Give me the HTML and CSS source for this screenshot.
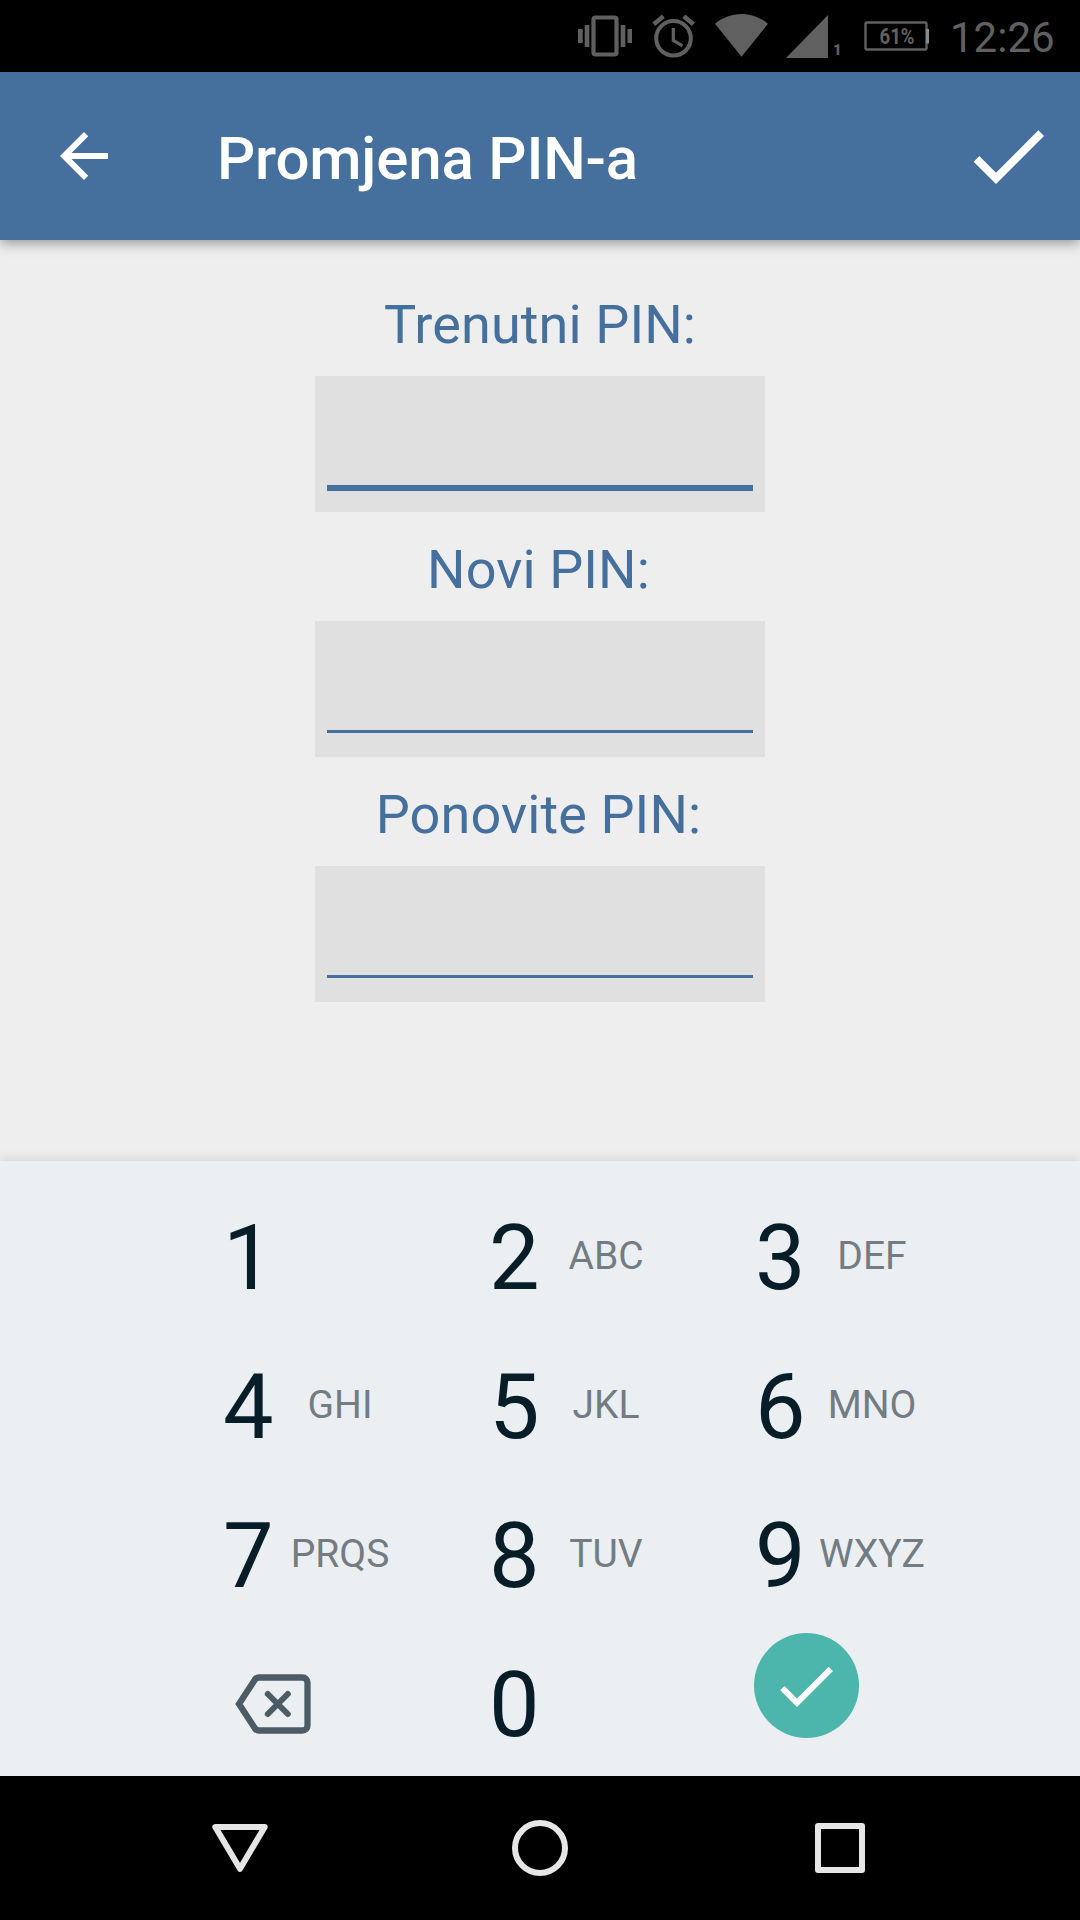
FILE: index.html
```html
<!DOCTYPE html>
<html lang="hr">
<head>
  <meta charset="utf-8">
  <title>Promjena PIN-a</title>
  <link rel="stylesheet" href="styles.css">
</head>
<body>
  <div class="screen">
    <div class="status-bar">
      <svg class="vibrate" width="56" height="44" viewBox="577 14 56 44">
        <path d="M578 29h4.7v14H578zM584.7 25h4.6v22h-4.6zM620.7 25h4.6v22h-4.6zM627.5 29h4.5v14h-4.5z"/>
        <rect x="593.5" y="17.5" width="23" height="37" rx="2" fill="none" stroke="#606060" stroke-width="4.2"/>
      </svg>
      <svg class="alarm" width="44" height="46" viewBox="652 13 44 46" fill="none" stroke="#606060">
        <circle cx="673.5" cy="38.3" r="17.3" stroke-width="4"/>
        <path d="M673.3 28v12.3l9.2 5.6" stroke-width="3.2"/>
        <path d="M653.8 24.3l9.6-8M693.4 24.3l-9.6-8" stroke-width="4.4"/>
      </svg>
      <svg class="wifi" width="54" height="44" viewBox="715 14 54 44">
        <path d="M715 23.8C722.5 17.5 732 14 741.5 14s19 3.5 26.5 9.8L741.5 56.8z"/>
      </svg>
      <div class="signal">
        <svg width="42" height="43" viewBox="0 0 42 43"><path d="M0 43L42 0v43z"/></svg>
        <span class="sim">1</span>
      </div>
      <svg class="battery" width="66" height="30" viewBox="864 20.5 66 30">
        <rect x="865.5" y="22" width="61" height="27" rx="1.5" fill="none" stroke="#606060" stroke-width="2.4"/>
        <path d="M926 28.5h3v14.5h-3z" fill="#8a8a8a"/>
        <text class="charge" x="879.5" y="43.8" textLength="35" lengthAdjust="spacingAndGlyphs">61%</text>
      </svg>
      <span class="clock">12:26</span>
    </div>

    <header class="app-bar">
      <svg width="72" height="72" viewBox="0 0 24 24"><path d="M20 11H7.83l5.59-5.59L12 4l-8 8 8 8 1.41-1.41L7.83 13H20z"/></svg>
      <h1 class="title">Promjena PIN-a</h1>
      <svg width="96" height="96" viewBox="0 0 24 24"><path d="M9 16.17L4.83 12l-1.42 1.41L9 19 21 7l-1.41-1.41z"/></svg>
    </header>

    <main class="form">
      <label class="field"><span class="caption">Trenutni PIN:</span><span class="input focused"></span></label>
      <label class="field"><span class="caption inset">Novi PIN:</span><span class="input"></span></label>
      <label class="field"><span class="caption inset">Ponovite PIN:</span><span class="input"></span></label>
    </main>

    <section class="keyboard">
      <div class="key"><span class="digit">1</span></div>
      <div class="key"><span class="digit">2</span><span class="letters">ABC</span></div>
      <div class="key"><span class="digit">3</span><span class="letters">DEF</span></div>
      <div class="key"><span class="digit">4</span><span class="letters">GHI</span></div>
      <div class="key"><span class="digit">5</span><span class="letters">JKL</span></div>
      <div class="key"><span class="digit">6</span><span class="letters">MNO</span></div>
      <div class="key"><span class="digit">7</span><span class="letters">PRQS</span></div>
      <div class="key"><span class="digit">8</span><span class="letters">TUV</span></div>
      <div class="key"><span class="digit">9</span><span class="letters">WXYZ</span></div>
      <div class="key">
        <svg class="delete" width="78" height="62" viewBox="234 1673 78 62">
          <path d="M259 1677.5h43.5a5 5 0 0 1 5 5v43a5 5 0 0 1-5 5H259q-2.5 0-4-2L239 1704l16-24.5q1.5-2 4-2z" stroke-width="6.3"/>
          <path d="M267.8 1694l20 20M287.8 1694l-20 20" stroke-width="6" stroke-linecap="round"/>
        </svg>
      </div>
      <div class="key"><span class="digit">0</span></div>
      <div class="key">
        <span class="done"><svg width="72" height="72" viewBox="0 0 24 24"><path d="M9 16.17L4.83 12l-1.42 1.41L9 19 21 7l-1.41-1.41z"/></svg></span>
      </div>
    </section>

    <nav class="nav-bar">
      <svg width="60" height="60" viewBox="-30 -30 60 60"><path d="M-24.7-21h49.4L0 20.8z"/></svg>
      <svg width="60" height="60" viewBox="-30 -30 60 60"><circle r="25"/></svg>
      <svg width="60" height="60" viewBox="-30 -30 60 60"><rect x="-22" y="-22" width="44" height="44"/></svg>
    </nav>
  </div>
</body>
</html>
```
FILE: styles.css
```css
* {
  box-sizing: border-box;
}

body {
  margin: 0;
  font-family: Roboto, "Noto Sans", sans-serif;
}

svg {
  display: block;
  flex: none;
}

.screen {
  display: flex;
  flex-direction: column;
  width: 1080px;
  height: 1920px;
  overflow: hidden;
  background: #eeeeee;
}

/* Status bar */
.status-bar {
  display: flex;
  align-items: center;
  justify-content: flex-end;
  flex: none;
  height: 72px;
  padding-right: 25px;
  background: #000;
  color: #606060;
  fill: #606060;
}

.alarm {
  margin-left: 19px;
}

.wifi {
  margin-left: 19px;
}

.signal {
  display: flex;
  align-items: flex-end;
  gap: 5px;
  width: 62px;
  height: 43px;
  margin-left: 17px;
}

.sim {
  font-size: 15px;
  font-weight: 900;
  line-height: 15px;
}

.battery {
  margin-left: 16px;
}

.charge {
  font-size: 22px;
  font-weight: 700;
}

.clock {
  width: 105px;
  margin-left: 20px;
  padding-top: 3px;
  font-size: 42px;
  line-height: 50px;
  white-space: nowrap;
}

/* App bar */
.app-bar {
  position: relative;
  display: flex;
  align-items: center;
  flex: none;
  height: 168px;
  padding: 0 24px 0 48px;
  background: #456f9c;
  box-shadow: 0 3px 12px rgba(0, 0, 0, 0.38);
  fill: #fff;
}

.title {
  flex: 1;
  margin: 0;
  padding: 5px 0 0 97px;
  color: #fff;
  font-size: 60px;
  font-weight: 500;
  letter-spacing: -0.18px;
  line-height: 70px;
}

/* PIN form */
.form {
  display: flex;
  flex-direction: column;
  align-items: center;
  gap: 26px;
  flex: 1;
  padding-top: 53px;
}

.field {
  display: flex;
  flex-direction: column;
  align-items: center;
  gap: 20px;
}

.caption {
  color: #456f9c;
  font-size: 54px;
  letter-spacing: 0.1px;
  line-height: 63px;
}

.inset {
  padding-right: 3px;
}

.input {
  width: 450px;
  height: 136px;
  padding: 109px 12px 0;
  background: #e0e0e0;
}

.input::after {
  content: "";
  display: block;
  height: 3px;
  background: #456f9c;
}

.focused::after {
  height: 6px;
}

/* Numeric keyboard */
.keyboard {
  display: grid;
  grid-template-columns: repeat(3, 266px);
  grid-template-rows: repeat(3, 149px) 1fr;
  flex: none;
  height: 615px;
  padding: 23px 0 0 223px;
  background: #ebeff2;
  box-shadow: 0 0 12px rgba(0, 0, 0, 0.15);
}

.key {
  display: flex;
  align-items: flex-start;
  height: 145px;
}

.digit {
  width: 51px;
  color: #071e28;
  font-size: 90px;
  line-height: 150px;
}

.letters {
  width: 110px;
  margin-left: 11px;
  color: #727c82;
  font-size: 39px;
  line-height: 145px;
  text-align: center;
}

.delete {
  margin: 42px 0 0 11px;
  fill: none;
  stroke: #4d5c64;
}

.done {
  display: grid;
  place-items: center;
  width: 105px;
  height: 105px;
  margin: 2px 0 0 -1.5px;
  border-radius: 50%;
  background: #4db6ac;
  fill: #fff;
}

/* Navigation bar */
.nav-bar {
  display: flex;
  align-items: center;
  justify-content: center;
  gap: 240px;
  flex: none;
  height: 144px;
  background: #000;
  fill: none;
  stroke: #e6e6e6;
  stroke-width: 6px;
  stroke-linejoin: round;
}
```
